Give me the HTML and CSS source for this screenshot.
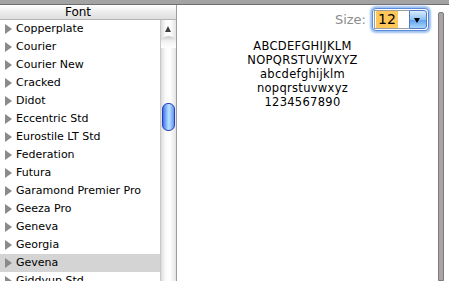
FILE: index.html
```html
<!DOCTYPE html>
<html lang="en">
<head>
    <meta charset="UTF-8">
    <title>Font</title>
    <link rel="stylesheet" href="styles.css">
</head>
<body>
    <div class="topbar"></div>
    <div class="panel">
        <div class="fonts">
            <div class="fonts-header">Font</div>
            <div class="fonts-body">
                <ul class="font-list">
                    <li>Copperplate</li>
                    <li>Courier</li>
                    <li>Courier New</li>
                    <li>Cracked</li>
                    <li>Didot</li>
                    <li>Eccentric Std</li>
                    <li>Eurostile LT Std</li>
                    <li>Federation</li>
                    <li>Futura</li>
                    <li>Garamond Premier Pro</li>
                    <li>Geeza Pro</li>
                    <li>Geneva</li>
                    <li>Georgia</li>
                    <li class="selected">Gevena</li>
                    <li>Giddyup Std</li>
                </ul>
                <div class="scrollbar">
                    <div class="scroll-up"></div>
                    <div class="scroll-thumb"></div>
                </div>
            </div>
        </div>
        <div class="preview">
            <div class="size-row">
                <span class="size-label">Size:</span>
                <div class="combo">
                    <div class="combo-field"><span class="combo-value">12</span></div>
                    <div class="combo-button"></div>
                </div>
            </div>
            <div class="sample">
                ABCDEFGHIJKLM<br>
                NOPQRSTUVWXYZ<br>
                abcdefghijklm<br>
                nopqrstuvwxyz<br>
                1234567890
            </div>
        </div>
        <div class="edge"></div>
    </div>
</body>
</html>
```

FILE: styles.css
```css
body {
    margin: 0;
    width: 449px;
    height: 281px;
    overflow: hidden;
    background: #fff;
    font-family: 'Lucida Grande', 'DejaVu Sans', sans-serif;
    color: #000;
}

.topbar {
    height: 4px;
    background: #a3a3a3;
    border-bottom: 1px solid #6e6e6e;
}

.panel {
    display: flex;
    height: 276px;
}

.fonts {
    width: 176px;
    display: flex;
    flex-direction: column;
    border-right: 1px solid #9c9c9c;
}

.fonts-header {
    height: 14px;
    line-height: 15px;
    font-size: 12px;
    text-align: center;
    padding-right: 20px;
    background: linear-gradient(#ffffff, #ececec 50%, #dedede);
    border-bottom: 1px solid #b4b4b4;
}

.fonts-body {
    flex: 1;
    display: flex;
    overflow: hidden;
}

.font-list {
    list-style: none;
    margin: 0;
    padding: 0;
    flex: 1;
    border-right: 1px solid #c8c8c8;
}

.font-list li {
    height: 18px;
    line-height: 17px;
    font-size: 11px;
    padding-left: 16px;
    position: relative;
    white-space: nowrap;
}

.font-list li::before {
    content: '';
    position: absolute;
    left: 5px;
    top: 4px;
    border-left: 7px solid #8a8a8a;
    border-top: 5px solid transparent;
    border-bottom: 5px solid transparent;
}

.font-list li.selected {
    background: #d4d4d4;
}

.scrollbar {
    width: 15px;
    background: linear-gradient(90deg, #dcdcdc, #fafafa 30%, #ffffff 60%, #e4e4e4);
    position: relative;
}

.scroll-up {
    height: 17px;
    position: relative;
}

.scroll-up::before {
    content: '';
    position: absolute;
    left: 4px;
    top: 6px;
    border-bottom: 6px solid #404040;
    border-left: 3.5px solid transparent;
    border-right: 3.5px solid transparent;
}

.scroll-up::after {
    content: '';
    position: absolute;
    left: 0;
    right: 0;
    top: 16px;
    height: 12px;
    border-radius: 50% 50% 0 0;
    background: linear-gradient(#c8c8c8, #f0f0f0 40%, #ffffff);
}

.scroll-thumb {
    position: absolute;
    left: 1px;
    top: 83px;
    width: 11px;
    height: 26px;
    border-radius: 6px;
    border: 1px solid #2c3fc4;
    background: linear-gradient(90deg, #3f6fe8, #8fc4ff 35%, #bfe2ff 55%, #5c97f0);
}

.preview {
    flex: 1;
    display: flex;
    flex-direction: column;
}

.size-row {
    display: flex;
    justify-content: flex-end;
    align-items: center;
    gap: 6px;
    padding: 3px 9px 0 0;
}

.size-label {
    font-size: 13px;
    color: #8c8c8c;
}

.combo {
    display: flex;
    height: 19px;
    padding: 1px;
    border: 1px solid #5b8ad9;
    border-radius: 4px;
    box-shadow: 0 0 2px 2px #9bc0f2;
    background: #fff;
}

.combo-field {
    width: 33px;
    border: 1px solid #9c9c9c;
    border-right: 0;
    display: flex;
    align-items: center;
    padding-left: 1px;
}

.combo-value {
    font-size: 14px;
    line-height: 17px;
    background: #ffc65a;
    padding: 0 2px;
}

.combo-button {
    width: 16px;
    border-radius: 0 3px 3px 0;
    background: linear-gradient(#d8ecff, #8ec2f6 50%, #62a4ee 55%, #a9d6ff);
    border: 1px solid #5678c0;
    position: relative;
}

.combo-button::before {
    content: '';
    position: absolute;
    left: 4px;
    top: 7px;
    border-top: 5px solid #000;
    border-left: 3.5px solid transparent;
    border-right: 3.5px solid transparent;
}

.sample {
    margin-top: 8px;
    padding-right: 10px;
    text-align: center;
    font-family: 'DejaVu Sans', sans-serif;
    font-size: 11.5px;
    line-height: 14px;
    letter-spacing: 0.3px;
}

.edge {
    width: 4px;
    margin: 7px 5px 0 0;
    background: #a9a5a5;
    border: 1px solid #7e7a7a;
    border-radius: 2px 2px 0 0;
}
```
